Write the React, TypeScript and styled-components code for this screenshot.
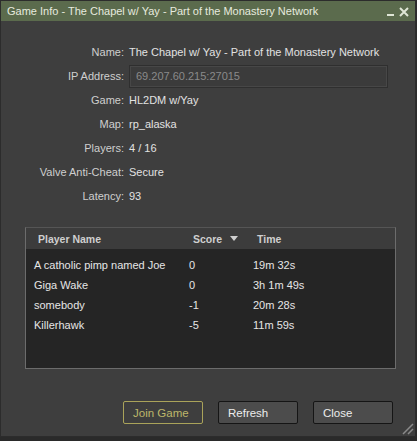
import React from 'react';
import styled, { createGlobalStyle } from 'styled-components';

const GlobalStyle = createGlobalStyle`
  html, body {
    margin: 0;
    padding: 0;
    background: #2a2a2a;
    font-family: "Liberation Sans", "DejaVu Sans", sans-serif;
    font-size: 11px;
  }
`;

const Window = styled.div`
  position: relative;
  width: 416px;
  height: 437px;
  box-sizing: border-box;
  border: 1px solid #2c2c2c;
  background: #3e3e3e;
  display: flex;
  flex-direction: column;
`;

const TitleBar = styled.div`
  height: 20px;
  background: #5b6b4d;
  display: flex;
  align-items: center;
  padding: 0 6px;
  color: #e6eadf;
  font-size: 11px;
`;

const TitleText = styled.div`
  flex: 1;
  white-space: nowrap;
`;

const TitleButtons = styled.div`
  display: flex;
  align-items: center;
  gap: 4px;
  margin-top: 2px;
`;

const Body = styled.div`
  flex: 1;
  display: flex;
  flex-direction: column;
  padding: 19px 21px 0 23px;
`;

const InfoGrid = styled.div`
  display: grid;
  grid-template-columns: 100px 1fr;
  grid-auto-rows: 24px;
  column-gap: 5px;
  align-items: center;
`;

const Label = styled.div`
  text-align: right;
  color: #cfcfcf;
  white-space: nowrap;
`;

const Value = styled.div`
  color: #e2e2e2;
  white-space: nowrap;
`;

const AddressBox = styled.div`
  height: 23px;
  width: 259px;
  box-sizing: border-box;
  border: 1px solid #2f2f2f;
  background: #3b3b3b;
  color: #8a8a8a;
  display: flex;
  align-items: center;
  padding-left: 6px;
  box-shadow: inset 0 0 0 1px #474747;
`;

const ListBox = styled.div`
  margin-top: 19px;
  width: 371px;
  height: 142px;
  margin-left: 1px;
  box-sizing: border-box;
  border: 1px solid #6c6c6c;
  border-top-color: #555;
  background: #252525;
  display: flex;
  flex-direction: column;
`;

const ListHeader = styled.div`
  height: 21px;
  background: #3c3c3c;
  display: grid;
  grid-template-columns: 155px 64px 1fr;
  align-items: center;
  padding-left: 12px;
  font-weight: bold;
  font-size: 10.5px;
  color: #cfcfcf;
`;

const HeaderCell = styled.div`
  display: flex;
  align-items: center;
  gap: 8px;
`;

const ListRows = styled.div`
  padding-top: 6px;
`;

const Row = styled.div`
  height: 20px;
  display: grid;
  grid-template-columns: 155px 64px 1fr;
  align-items: center;
  padding-left: 8px;
  color: #e6e6e6;
`;

const ButtonRow = styled.div`
  margin-top: 32px;
  display: flex;
  justify-content: flex-end;
  gap: 15px;
  padding-right: 1px;
`;

const Button = styled.div<{ $primary?: boolean }>`
  width: 80px;
  height: 23px;
  box-sizing: border-box;
  border-radius: 2px;
  display: flex;
  align-items: center;
  padding-left: 9px;
  font-size: 11.5px;
  ${p =>
    p.$primary
      ? `
    border: 1px solid #aaa35a;
    background: #3e3e3e;
    color: #bdb66a;
  `
      : `
    border: 1px solid #151515;
    background: #4c4c4c;
    color: #ececec;
  `}
`;

const Grip = styled.svg`
  position: absolute;
  right: 1px;
  bottom: 1px;
`;

const BottomStrip = styled.div`
  height: 4px;
  background: #2a2a2a;
`;

const info: [string, string][] = [
  ['Name:', 'The Chapel w/ Yay - Part of the Monastery Network'],
  ['IP Address:', '69.207.60.215:27015'],
  ['Game:', 'HL2DM w/Yay'],
  ['Map:', 'rp_alaska'],
  ['Players:', '4 / 16'],
  ['Valve Anti-Cheat:', 'Secure'],
  ['Latency:', '93'],
];

const players = [
  { name: 'A catholic pimp named Joe', score: '0', time: '19m 32s' },
  { name: 'Giga Wake', score: '0', time: '3h 1m 49s' },
  { name: 'somebody', score: '-1', time: '20m 28s' },
  { name: 'Killerhawk', score: '-5', time: '11m 59s' },
];

export default function App() {
  return (
    <>
      <GlobalStyle />
      <Window>
        <TitleBar>
          <TitleText>Game Info - The Chapel w/ Yay - Part of the Monastery Network</TitleText>
          <TitleButtons>
            <svg width="8" height="10" viewBox="0 0 8 10">
              <rect x="0" y="7" width="7" height="2" fill="#dfe6d6" />
            </svg>
            <svg width="10" height="10" viewBox="0 0 10 10">
              <path d="M1 1 L9 9 M9 1 L1 9" stroke="#dfe6d6" strokeWidth="2" />
            </svg>
          </TitleButtons>
        </TitleBar>
        <Body>
          <InfoGrid>
            {info.map(([label, value]) => (
              <React.Fragment key={label}>
                <Label>{label}</Label>
                {label === 'IP Address:' ? <AddressBox>{value}</AddressBox> : <Value>{value}</Value>}
              </React.Fragment>
            ))}
          </InfoGrid>
          <ListBox>
            <ListHeader>
              <HeaderCell>Player Name</HeaderCell>
              <HeaderCell>
                Score
                <svg width="8" height="5" viewBox="0 0 8 5">
                  <path d="M0 0 L8 0 L4 5 Z" fill="#cfcfcf" />
                </svg>
              </HeaderCell>
              <HeaderCell>Time</HeaderCell>
            </ListHeader>
            <ListRows>
              {players.map(p => (
                <Row key={p.name}>
                  <div>{p.name}</div>
                  <div>{p.score}</div>
                  <div>{p.time}</div>
                </Row>
              ))}
            </ListRows>
          </ListBox>
          <ButtonRow>
            <Button $primary>Join Game</Button>
            <Button>Refresh</Button>
            <Button>Close</Button>
          </ButtonRow>
        </Body>
        <Grip width="16" height="16" viewBox="0 0 16 16">
          <path d="M15 5 L5 15 M15 10 L10 15" stroke="#8a8a8a" strokeWidth="1.5" />
        </Grip>
      </Window>
      <BottomStrip />
    </>
  );
}
